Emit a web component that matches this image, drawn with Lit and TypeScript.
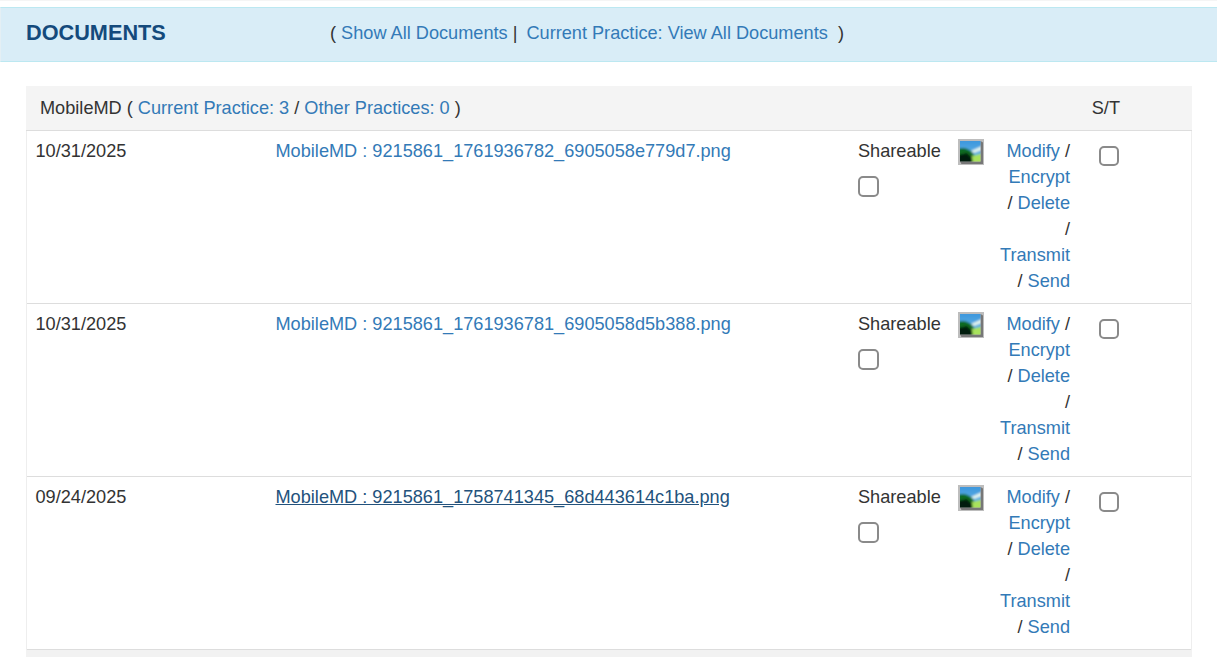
import { LitElement, html, css } from "lit";
import { customElement } from "lit/decorators.js";

const rows = [
  { date: "10/31/2025", file: "MobileMD : 9215861_1761936782_6905058e779d7.png", hover: false },
  { date: "10/31/2025", file: "MobileMD : 9215861_1761936781_6905058d5b388.png", hover: false },
  { date: "09/24/2025", file: "MobileMD : 9215861_1758741345_68d443614c1ba.png", hover: true },
];

const thumb = (id: number) => html`<svg class="thumb" viewBox="0 0 26 26" aria-hidden="true">
  <defs>
    <linearGradient id="sky${id}" x1="0" y1="0" x2="0" y2="1"><stop offset="0" stop-color="#3a94dc"/><stop offset="1" stop-color="#6fc0ea"/></linearGradient>
    <filter id="soft${id}" x="-10%" y="-10%" width="120%" height="120%"><feGaussianBlur stdDeviation="1"/></filter>
    <clipPath id="clip${id}"><rect x="2" y="2" width="20.5" height="20.5"/></clipPath>
  </defs>
  <rect width="26" height="26" fill="#bdbdbd"/>
  <path d="M22.5 2 L25 3.5 L25 25 L3.5 25 L2 22.5 L22.5 22.5Z" fill="#777"/>
  <g clip-path="url(#clip${id})">
    <g filter="url(#soft${id})">
      <rect x="0" y="0" width="26" height="26" fill="url(#sky${id})"/>
      <path d="M13 12 L24 7 L24 11 L16 14Z" fill="#e2f4ee"/>
      <path d="M0 10 Q7 7 14 13 L17 17 L17 26 L0 26Z" fill="#0f6a20"/>
      <path d="M0 16 L9 14 L14 19 L14 26 L0 26Z" fill="#021c08"/>
      <path d="M14 17 L26 14 L26 26 L15 26Z" fill="#a8e25c"/>
    </g>
  </g>
</svg>`;

@customElement("app-root")
export class AppRoot extends LitElement {
  static styles = css`
    :host { display: block; font-family: "Liberation Sans", Arial, sans-serif; font-size: 18.17px; line-height: 26px; color: #333; background: #fff; height: 657px; overflow: hidden; box-sizing: border-box; padding-right: 2px; }
    a { color: #337ab7; text-decoration: none; }
    a.hover { color: #23527c; text-decoration: underline; }
    .topline { height: 7px; box-sizing: border-box; border-top: 1px solid #f5f5f5; }
    .panel { height: 55px; box-sizing: border-box; background: #d9edf7; border: 1px solid #bce8f1; border-width: 1px 0; border-left: 1px solid #e4eff4; display: flex; align-items: center; padding-bottom: 4px; }
    .title { width: 329px; padding-left: 25px; box-sizing: border-box; font-size: 21.7px; font-weight: 700; color: #144a7c; }
    .nav { white-space: pre; }
    .nav a + a { margin-left: 4px; }
    .body { margin: 24px 0 0 26px; width: 1166px; border-left: 1px solid #eee; border-right: 1px solid #eee; box-sizing: border-box; }
    .head { height: 45px; background: #f4f4f4; border-bottom: 1px solid #ddd; box-sizing: border-box; display: flex; justify-content: space-between; padding: 9px 72px 0 14px; margin: 0 -1px; }
    .row { display: grid; grid-template-columns: 240px 582.5px 100px 26px 87px 1fr; height: 173px; box-sizing: border-box; padding: 7px 0 0 8.5px; border-bottom: 1px solid #ddd; align-content: start; }
    .share { display: flex; flex-direction: column; align-items: flex-start; }
    input { appearance: none; box-sizing: border-box; display: block; background: #fff; border: 2px solid #8a8a8a; border-radius: 5px; }
    .share input { width: 21px; height: 21px; margin: 12px 0 0; }
    .thumb { width: 26px; height: 26px; display: block; margin-top: 1px; }
    .ops { text-align: right; padding: 0 1px 0 16px; }
    .st { padding-left: 28px; }
    .st input { width: 20px; height: 20px; margin: 8px 0 0; }
    .foot { height: 8px; background: #f2f2f2; margin: 0 -1px; }
  `;
  render() {
    return html`
      <div class="topline"></div>
      <div class="panel">
        <div class="title">DOCUMENTS</div>
        <div class="nav">( <a href="#">Show All Documents</a> | <a href="#">Current Practice: View All Documents</a> &nbsp;)</div>
      </div>
      <div class="body">
        <div class="head">
          <div>MobileMD ( <a href="#">Current Practice: 3</a> / <a href="#">Other Practices: 0</a> )</div>
          <div>S/T</div>
        </div>
        ${rows.map((r, i) => html`
          <div class="row">
            <div>${r.date}</div>
            <div><a href="#" class=${r.hover ? "hover" : ""}>${r.file}</a></div>
            <div class="share"><span>Shareable</span><input type="checkbox" /></div>
            ${thumb(i)}
            <div class="ops"><a href="#">Modify</a> / <a href="#">Encrypt</a> / <a href="#">Delete</a> / <a href="#">Transmit</a> / <a href="#">Send</a></div>
            <div class="st"><input type="checkbox" /></div>
          </div>`)}
        <div class="foot"></div>
      </div>`;
  }
}
